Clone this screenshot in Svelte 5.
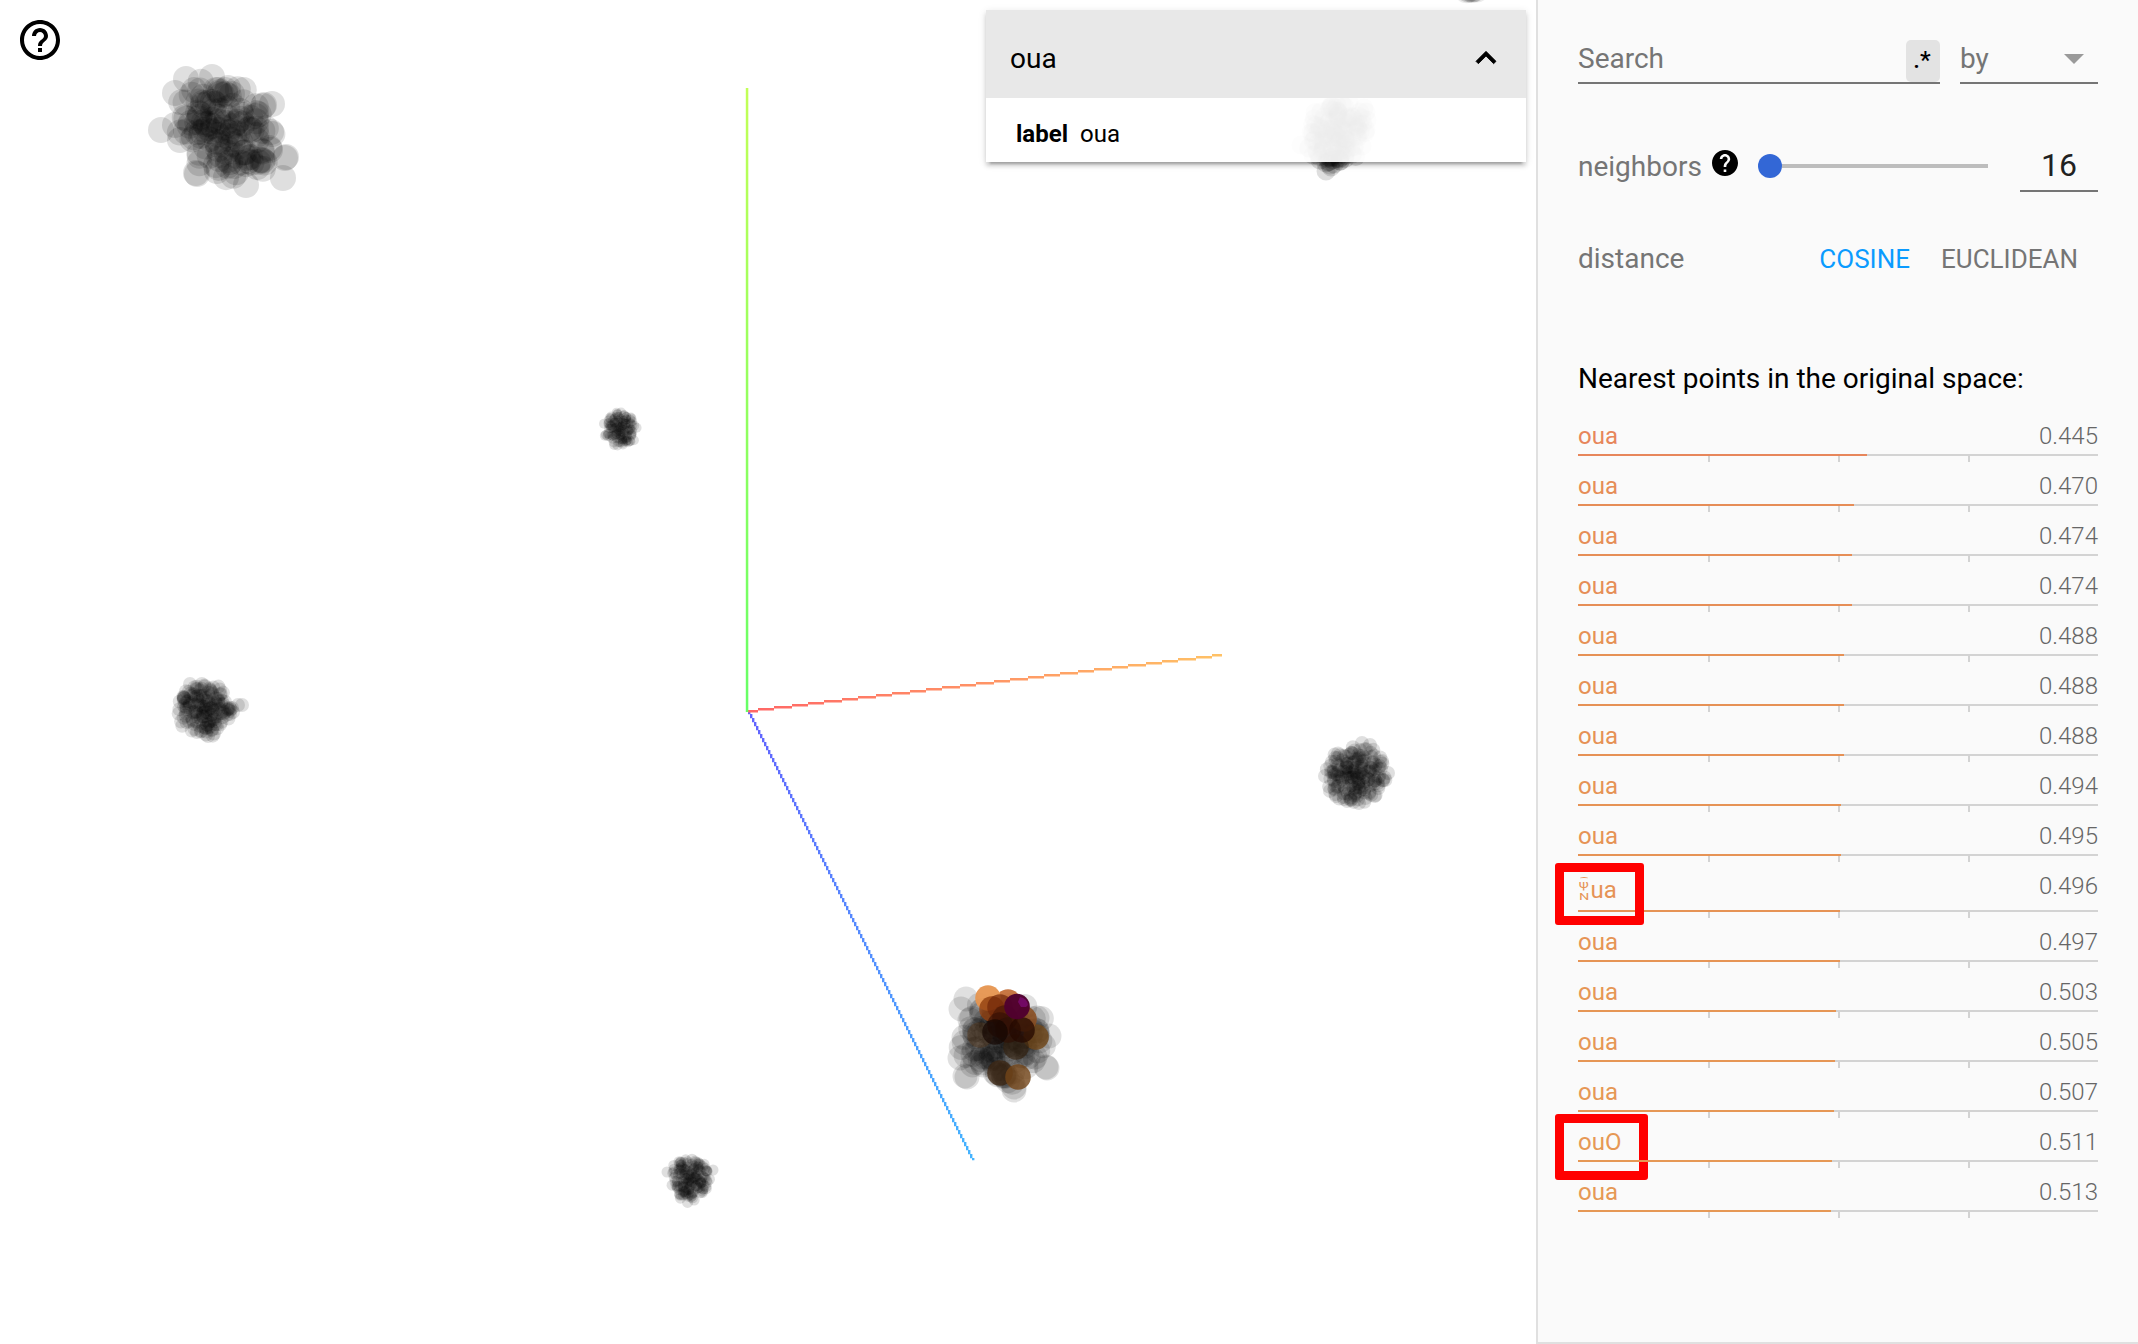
<script>
  const neighbors = [
    ['oua', '0.445', '#e7865b'],
    ['oua', '0.470', '#e68d57'],
    ['oua', '0.474', '#e68e57'],
    ['oua', '0.474', '#e68e57'],
    ['oua', '0.488', '#e69155'],
    ['oua', '0.488', '#e69155'],
    ['oua', '0.488', '#e69155'],
    ['oua', '0.494', '#e69355'],
    ['oua', '0.495', '#e69355'],
    ['ua', '0.496', '#e69355', 'first'],
    ['oua', '0.497', '#e69455'],
    ['oua', '0.503', '#e69655'],
    ['oua', '0.505', '#e69655'],
    ['oua', '0.507', '#e69755'],
    ['ouO', '0.511', '#e69855', 'second'],
    ['oua', '0.513', '#e69855'],
  ];

  function random(seed) {
    return () => {
      seed = (seed + 0x6d2b79f5) | 0;
      let t = Math.imul(seed ^ (seed >>> 15), 1 | seed);
      t = (t + Math.imul(t ^ (t >>> 7), 61 | t)) ^ t;
      return ((t ^ (t >>> 14)) >>> 0) / 4294967296;
    };
  }

  // Points spread over an ellipse; `tilt` is in degrees.
  function cluster({ x, y, rx, ry, r, n, seed, tilt = 0, a = 0.12, extra = [] }) {
    const rnd = random(seed);
    const t = (tilt * Math.PI) / 180;
    const dots = [];
    for (let i = 0; i < n; i++) {
      // Golden-angle spacing keeps the density even, jitter breaks the pattern.
      const ang = i * 2.39996 + rnd() * 0.9;
      const d = Math.pow((i + 0.5) / n, 0.58) * (0.84 + rnd() * 0.2);
      const u = Math.cos(ang) * d * rx;
      const v = Math.sin(ang) * d * ry;
      dots.push([x + u * Math.cos(t) - v * Math.sin(t), y + u * Math.sin(t) + v * Math.cos(t)]);
    }
    return { dots: [...dots, ...extra], r, a };
  }

  const clusters = [
    cluster({ x: 227, y: 130, rx: 58, ry: 43, r: 13, n: 125, seed: 11, tilt: 46, a: 0.125,
      extra: [[161, 130], [175, 93], [186, 79], [196, 173], [197, 174], [212, 77], [285, 158], [286, 157],
        [283, 178], [272, 104], [264, 105], [246, 185], [225, 90], [220, 92], [232, 94], [228, 88], [216, 90],
        [205, 130], [204, 122], [200, 114], [208, 128], [230, 162], [228, 160], [234, 166], [260, 160], [262, 160], [263, 106], [175, 125], [180, 140]] }),
    cluster({ x: 620, y: 429, rx: 17, ry: 18, r: 5, n: 125, seed: 5, a: 0.12 }),
    cluster({ x: 205, y: 709, rx: 29, ry: 27, r: 7, n: 165, seed: 23, a: 0.12,
      extra: [[242, 705], [238, 705], [232, 708], [184, 697], [190, 684], [184, 698], [188, 701], [230, 714], [233, 712], [208, 736]] }),
    cluster({ x: 1356, y: 775, rx: 31, ry: 30, r: 7, n: 185, seed: 42, a: 0.125,
      extra: [[1362, 743], [1370, 745], [1325, 776], [1388, 773], [1336, 796], [1359, 803]] }),
    cluster({ x: 690, y: 1179, rx: 20, ry: 23, r: 5.5, n: 150, seed: 9, a: 0.125,
      extra: [[667, 1172], [713, 1170], [682, 1167], [681, 1168], [700, 1181], [701, 1183], [693, 1193]] }),
    cluster({ x: 1336, y: 133, rx: 30, ry: 34, r: 9.5, n: 120, seed: 17, tilt: 20, a: 0.13,
      extra: [[1326, 171], [1331, 167], [1330, 165], [1334, 164], [1328, 162], [1366, 130], [1340, 161], [1320, 160], [1333, 160], [1330, 158], [1326, 163], [1301, 145], [1313, 155],
        [1364, 108], [1366, 112], [1362, 118], [1360, 112], [1367, 120], [1363, 124]] }),
    cluster({ x: 1003, y: 1041, rx: 44, ry: 44, r: 12.5, n: 115, seed: 31, a: 0.12,
      extra: [[961, 1009], [966, 999], [960, 1058], [965, 1076], [967, 1077], [1049, 1036], [1047, 1068], [1046, 1067], [1014, 1087], [1014, 1090], [1037, 1018], [970, 1020], [975, 1030], [1035, 1057], [982, 1057]] }),
    cluster({ x: 1471, y: -10.5, rx: 8, ry: 1, r: 13, n: 8, seed: 2, a: 0.08 }),
  ];

  const selected = [
    [980, 1035, '#53300f', 0.4], [1036, 1037, '#714719', 0.8], [1016, 1047, '#33200e', 0.65],
    [1024, 1019, '#8c4d1e', 0.85], [1008, 1002, '#c4703a', 0.95], [988, 998, '#e6954f', 0.95],
    [992, 1009, '#91400f', 0.8], [1000, 1007, '#702708', 0.7], [1005, 1018, '#451505', 0.65], [1000, 1025, '#351005', 0.65],
    [1008, 1030, '#301004', 0.65], [995, 1032, '#140601', 0.7], [1022, 1030, '#240800', 0.75],
    [1000, 1073, '#3b2410', 0.75], [1018, 1077, '#734518', 0.8],
    [1017, 1006.5, '#50002e', 0.97],
  ];

  // Axes are rasterised on a two-pixel grid.
  function raster(x1, y1, x2, y2, w, h) {
    const count = Math.max(Math.abs(x2 - x1), Math.abs(y2 - y1)) / 2;
    let d = '';
    for (let i = 0; i <= count; i++) {
      const px = Math.round((x1 + ((x2 - x1) * i) / count) / 2) * 2;
      const py = Math.round((y1 + ((y2 - y1) * i) / count) / 2) * 2;
      d += `M${px} ${py}h${w}v${h}h-${w}z`;
    }
    return d;
  }
  const xAxis = raster(748, 710, 1220, 654, 2, 2.4);
  const zAxis = raster(748, 712, 972, 1158, 2.4, 2.2);
</script>

<div class="app">
  <main class="viewport">
    <svg class="scene" width="1536" height="1344" viewBox="0 0 1536 1344">
      <defs>
        <linearGradient id="gy" gradientUnits="userSpaceOnUse" x1="0" y1="711" x2="0" y2="88">
          <stop offset="0" stop-color="#66ff66" /><stop offset="1" stop-color="#c2ff57" />
        </linearGradient>
        <linearGradient id="gx" gradientUnits="userSpaceOnUse" x1="748" y1="0" x2="1222" y2="0">
          <stop offset="0" stop-color="#ff6666" /><stop offset="1" stop-color="#ffc266" />
        </linearGradient>
        <linearGradient id="gz" gradientUnits="userSpaceOnUse" x1="0" y1="711" x2="0" y2="1160">
          <stop offset="0" stop-color="#6262ff" /><stop offset="1" stop-color="#45b4ff" />
        </linearGradient>
      </defs>
      <path d={zAxis} fill="url(#gz)" />
      <path d={xAxis} fill="url(#gx)" />
      <rect x="745.8" y="88" width="2.5" height="624" fill="url(#gy)" />
      {#each clusters as c}
        <g fill-opacity={c.a}>
          {#each c.dots as [x, y]}<circle cx={x} cy={y} r={c.r} />{/each}
        </g>
      {/each}
      {#each selected as [x, y, color, alpha]}
        <circle cx={x} cy={y} r="12.8" fill={color} fill-opacity={alpha} />
      {/each}
      <path d="M1020 997q7 1 8 8l-2 2h-5l-3-5z" fill="#7a0a70" fill-opacity=".8" />
    </svg>
    <svg class="help" viewBox="0 0 24 24">
      <path d="M11 18h2v-2h-2v2zm1-16C6.48 2 2 6.48 2 12s4.48 10 10 10 10-4.48 10-10S17.52 2 12 2zm0 18c-4.41 0-8-3.59-8-8s3.59-8 8-8 8 3.59 8 8-3.59 8-8 8zm0-14c-2.21 0-4 1.79-4 4h2c0-1.1.9-2 2-2s2 .9 2 2c0 2-3 1.75-3 5h2c0-2.25 3-2.5 3-5 0-2.21-1.79-4-4-4z" />
    </svg>
    <section class="card">
      <header>
        <span>oua</span>
        <svg viewBox="0 0 24 24"><path d="M12 8l-6 6 1.41 1.41L12 10.83l4.59 4.58L18 14z" /></svg>
      </header>
      <div class="meta"><b>label</b><span>oua</span></div>
    </section>
  </main>

  <aside>
    <div class="search-row">
      <div class="field grow"><span>Search</span><button>.*</button></div>
      <div class="field by"><span>by</span><i class="caret"></i></div>
    </div>

    <div class="num-row">
      <span class="name">neighbors</span>
      <svg class="q" viewBox="2 2 20 20">
        <path d="M12 2C6.48 2 2 6.48 2 12s4.48 10 10 10 10-4.48 10-10S17.52 2 12 2zm1 17h-2v-2h2v2zm2.07-7.75l-.9.92C13.45 12.9 13 13.5 13 15h-2v-.5c0-1.1.45-2.1 1.17-2.83l1.24-1.26c.37-.36.59-.86.59-1.41 0-1.1-.9-2-2-2s-2 .9-2 2H8c0-2.21 1.79-4 4-4s4 1.79 4 4c0 .88-.36 1.68-.93 2.25z" />
      </svg>
      <div class="slider"><i class="knob"></i><i class="track"></i></div>
      <div class="num">16</div>
    </div>

    <div class="dist-row">
      <span class="name">distance</span>
      <span class="opt on">COSINE</span>
      <span class="opt">EUCLIDEAN</span>
    </div>

    <h2>Nearest points in the original space:</h2>

    <div class="list">
      {#each neighbors as [label, value, color, mark]}
        <div class="item" class:tall={mark === 'first'}>
          <div class="text">
            <span class="label" style:color={color}>
              {#if mark === 'first'}<span class="stack"><i class="arc"></i><i class="psi">ψ</i><i class="en">N</i></span>{/if}{label}
            </span>
            <span class="value">{value}</span>
          </div>
          <div class="bar">
            <div class="fill" style:width="{(1 - value) * 100}%" style:background={color}></div>
          </div>
          <div class="ticks"><i></i><i></i><i></i></div>
          {#if mark}<div class="mark {mark}"></div>{/if}
        </div>
      {/each}
    </div>
  </aside>
</div>

<style>
  :global(body) { background: #fff; }
  .app {
    display: flex;
    width: 2138px;
    height: 1344px;
    overflow: hidden;
    font-family: Roboto, sans-serif;
    color: #000;
  }
  .viewport { position: relative; width: 1536px; flex: none; background: #fff; }
  .scene { display: block; }
  .help { position: absolute; left: 16px; top: 16px; width: 48px; height: 48px; }
  .card {
    position: absolute;
    left: 986px;
    top: 10px;
    width: 540px;
    box-shadow: 0 4px 4px rgba(0, 0, 0, .14), 0 2px 8px rgba(0, 0, 0, .12), 0 6px 2px -4px rgba(0, 0, 0, .2);
  }
  .card header {
    display: flex;
    justify-content: space-between;
    align-items: center;
    height: 88px;
    box-sizing: border-box;
    padding: 8px 20px 0 24px;
    background: #e8e8e8;
    font-size: 28px;
  }
  .card header svg { width: 40px; height: 40px; stroke: #000; stroke-width: .5; }
  .meta {
    display: flex;
    gap: 12px;
    padding: 4px 30px 0;
    height: 60px;
    line-height: 64px;
    font-size: 24px;
    background: rgba(255, 255, 255, .92);
  }
  aside {
    flex: 1;
    box-sizing: border-box;
    padding: 40px 40px 0;
    border-left: 2px solid #e0e0e0;
    border-bottom: 2px solid #e0e0e0;
    background: #fafafa;
  }
  .search-row { display: flex; gap: 20px; }
  .field {
    display: flex;
    justify-content: space-between;
    height: 42px;
    line-height: 37px;
    border-bottom: 2px solid #757575;
    font-size: 28px;
    color: #757575;
  }
  .grow { flex: 1; }
  .by { width: 138px; }
  button {
    width: 34px;
    height: 42px;
    padding: 0 2px 2px 0;
    border: 0;
    border-radius: 5px;
    background: #e3e3e3;
    font: 500 24px Roboto, sans-serif;
    color: #000;
  }
  .caret {
    width: 0;
    height: 0;
    margin: 14px 14px 0 0;
    border: 10px solid transparent;
    border-top-color: #9a9a9a;
    border-bottom: 0;
  }
  .num-row { display: flex; align-items: center; height: 52px; margin-top: 56px; }
  .name { font-size: 28px; color: #757575; }
  .num-row .name { width: 134px; }
  .q { width: 26px; height: 26px; margin-bottom: 6px; }
  .slider { display: flex; align-items: center; width: 230px; margin-left: 20px; }
  .knob { width: 24px; height: 24px; border-radius: 50%; background: #3367d6; }
  .track { flex: 1; height: 4px; background: #bdbdbd; }
  .num {
    width: 78px;
    height: 50px;
    line-height: 50px;
    margin-left: 32px;
    border-bottom: 2px solid #757575;
    font-size: 32px;
    text-align: center;
    color: #212121;
  }
  .dist-row { display: flex; align-items: center; height: 40px; margin-top: 46px; padding-right: 20px; }
  .dist-row .name { flex: 1; }
  .opt { padding-top: 2px; font-size: 26px; color: #757575; margin-left: 31px; }
  .on { color: #0a9bff; }
  h2 { margin: 81px 0 21px; font-size: 28px; line-height: 40px; font-weight: 400; white-space: nowrap; }
  .item { position: relative; height: 50px; }
  .text { display: flex; justify-content: space-between; height: 34px; line-height: 33px; font-size: 24px; }
  .tall { height: 56px; }
  .tall .text { height: 40px; }
  .tall .label { padding-top: 4px; }
  .label { display: flex; }
  .value { font-weight: 300; color: #666; }
  .bar { position: relative; z-index: 1; height: 2px; background: #d3d3d3; }
  .fill { height: 2px; }
  .ticks { display: grid; grid-template-columns: repeat(4, 1fr); height: 6px; }
  .ticks i { border-right: 2px solid #d3d3d3; margin-right: -2px; }
  .stack { display: flex; flex-direction: column; align-items: center; width: 12.5px; padding-top: 3px; }
  .stack i { font-style: normal; }
  .arc { box-sizing: border-box; width: 8px; height: 3px; border-top: 1.5px solid; border-radius: 50% 50% 0 0; }
  .psi { font-size: 11px; height: 11px; line-height: 9px; transform: scaleX(1.3); }
  .en { font-size: 9px; height: 11px; line-height: 13px; transform: scaleX(1.6); }
  .mark { position: absolute; left: -23px; box-sizing: border-box; border: 9px solid #f00; border-radius: 3px; }
  .first { z-index: 2; top: -7px; width: 89px; height: 62px; }
  .second { top: -12px; width: 93px; height: 66px; }
</style>
